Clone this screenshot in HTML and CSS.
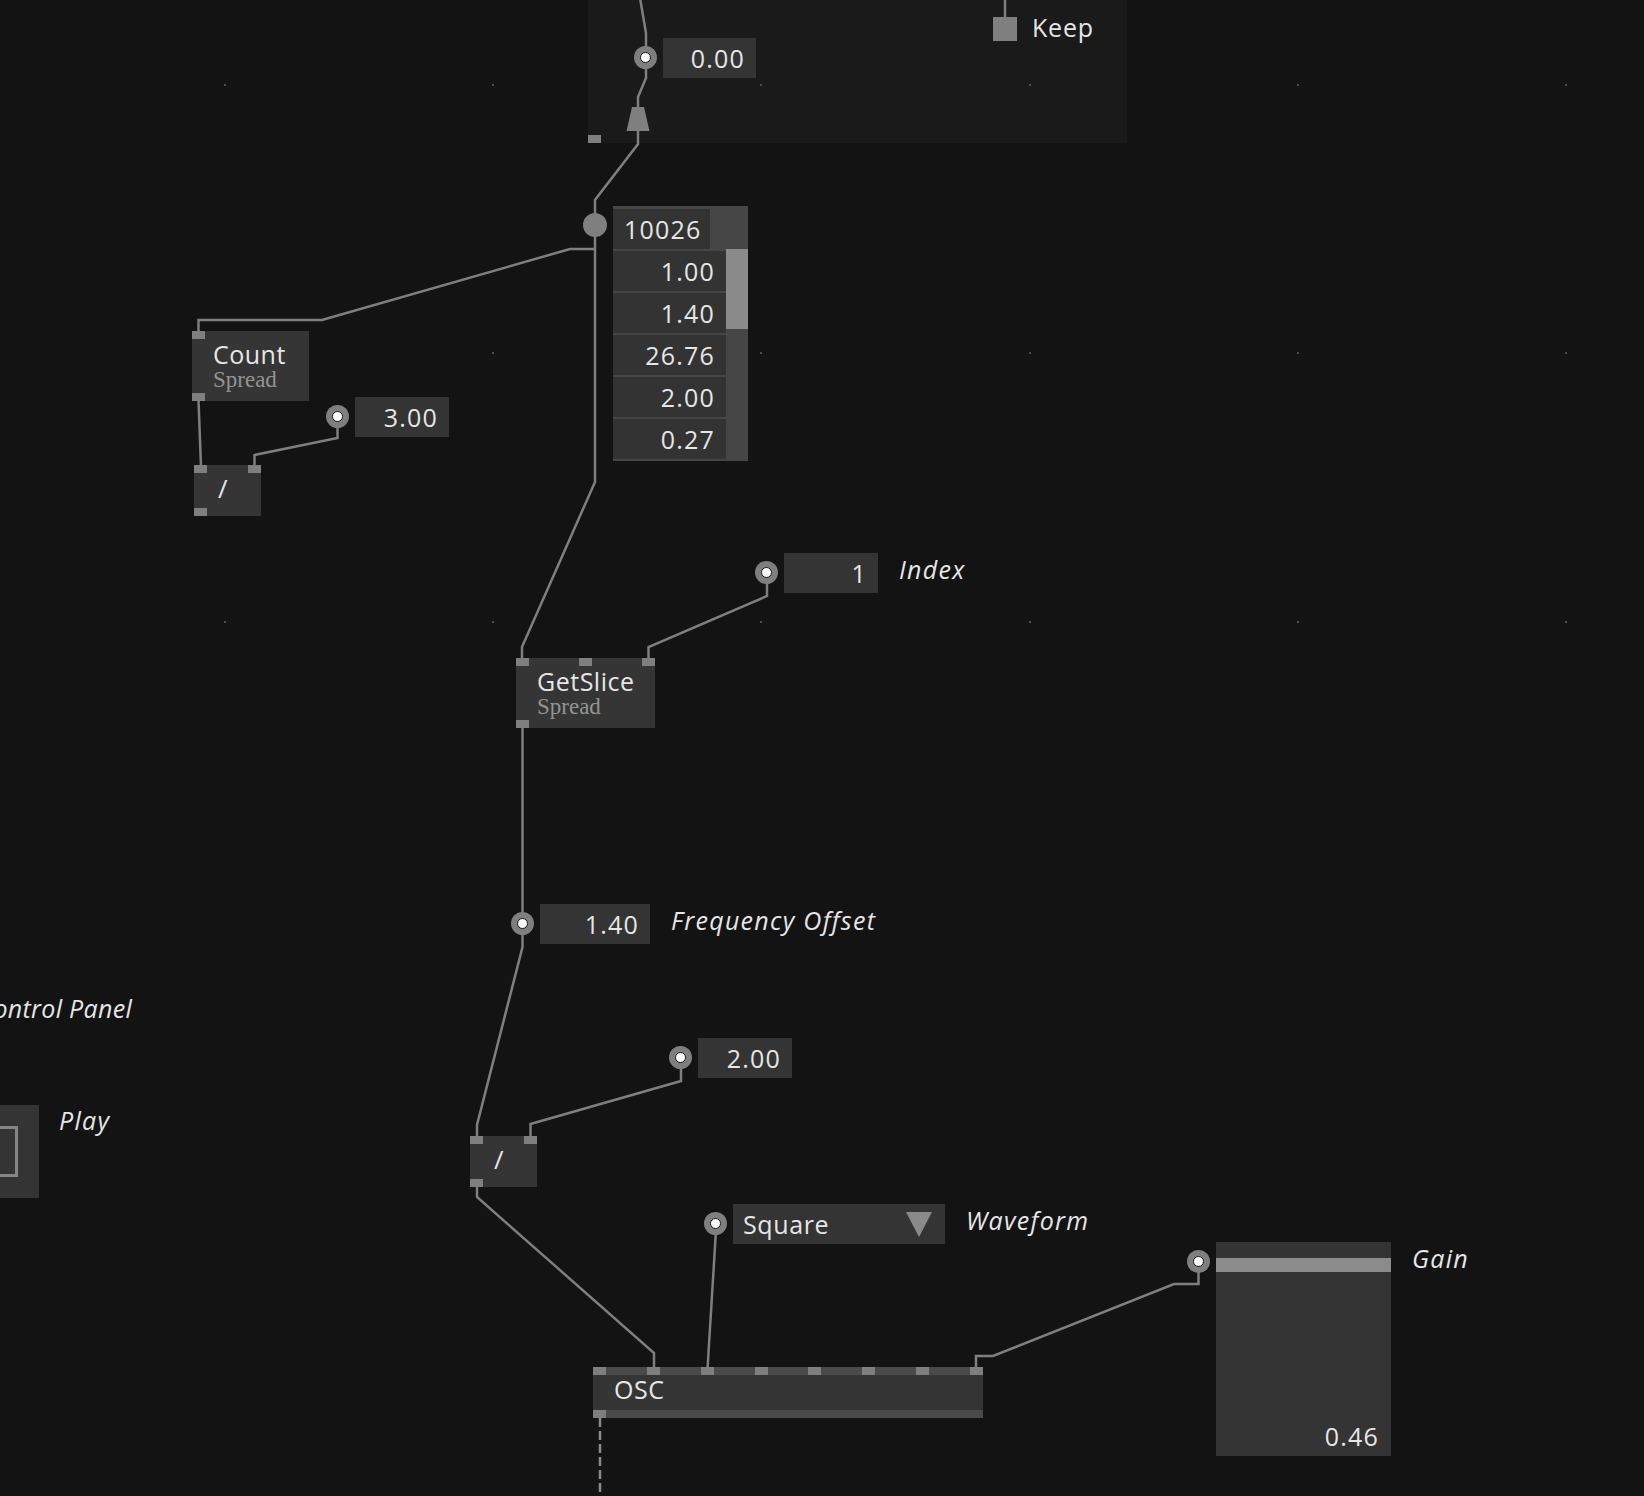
FILE: index.html
```html
<!DOCTYPE html>
<html lang="en">
<head>
    <meta charset="UTF-8">
    <title>Patch</title>
    <link rel="stylesheet" href="styles.css">
</head>
<body>
    <div class="patch">
        <!-- group region at the top -->
        <div class="group">
            <div class="group-pin"></div>
        </div>

        <svg class="wires" width="1644" height="1496" viewBox="0 0 1644 1496">
            <g class="grid">
                <rect x="224" y="84" width="2" height="2"/><rect x="492" y="84" width="2" height="2"/>
                <rect x="760" y="84" width="2" height="2"/><rect x="1029" y="84" width="2" height="2"/>
                <rect x="1297" y="84" width="2" height="2"/><rect x="1565" y="84" width="2" height="2"/>
                <rect x="224" y="352" width="2" height="2"/><rect x="492" y="352" width="2" height="2"/>
                <rect x="760" y="352" width="2" height="2"/><rect x="1029" y="352" width="2" height="2"/>
                <rect x="1297" y="352" width="2" height="2"/><rect x="1565" y="352" width="2" height="2"/>
                <rect x="224" y="621" width="2" height="2"/><rect x="492" y="621" width="2" height="2"/>
                <rect x="760" y="621" width="2" height="2"/><rect x="1029" y="621" width="2" height="2"/>
                <rect x="1297" y="621" width="2" height="2"/><rect x="1565" y="621" width="2" height="2"/>
            </g>
            <polyline points="640,-2 646,33 646,50"/>
            <polyline points="646,66 646,78 638,97 638,108"/>
            <polygon class="outlet" points="632,107 644,107 649.5,131 626.5,131"/>
            <polyline points="638,130 638,144 595,200 595,215"/>
            <polyline points="595,236 595,482 522,647 522,660"/>
            <polyline points="595,249 570,249 322,320 198.5,320 198.5,333"/>
            <polyline points="198.5,400 201,467"/>
            <polyline points="337.5,425 337.5,438 254.5,455 254.5,467"/>
            <polyline points="767,582 767,596 648.5,647 648.5,660"/>
            <polyline points="522.5,726 522.5,914"/>
            <polyline points="522.5,931 522.5,947 477,1125 477,1138"/>
            <polyline points="681,1066 681,1081 530.5,1124 530.5,1138"/>
            <polyline points="477,1185 477,1197 654,1353 654,1369"/>
            <polyline points="716,1230 707.5,1369"/>
            <polyline points="1198.5,1270 1198.5,1284 1174,1284 993,1356 976,1356 976,1369"/>
            <polyline points="1005,-2 1005,19"/>
            <polyline class="dashed" points="600,1418 600,1500"/>
        </svg>

        <!-- nodes -->
        <div class="node n-count">
            <div class="pins"><span class="pin"></span></div>
            <div class="title">Count</div>
            <div class="sub">Spread</div>
            <div class="pins pins-bottom"><span class="pin"></span></div>
        </div>

        <div class="node node-op n-div1">
            <div class="pins"><span class="pin"></span><span class="pin"></span></div>
            <div class="title">/</div>
            <div class="pins pins-bottom"><span class="pin"></span></div>
        </div>

        <div class="node n-getslice">
            <div class="pins"><span class="pin"></span><span class="pin"></span><span class="pin"></span></div>
            <div class="title">GetSlice</div>
            <div class="sub">Spread</div>
            <div class="pins pins-bottom"><span class="pin"></span></div>
        </div>

        <div class="node node-op n-div2">
            <div class="pins"><span class="pin"></span><span class="pin"></span></div>
            <div class="title">/</div>
            <div class="pins pins-bottom"><span class="pin"></span></div>
        </div>

        <div class="node node-wide n-osc">
            <div class="pins strip">
                <span class="pin"></span><span class="pin"></span><span class="pin"></span><span class="pin"></span>
                <span class="pin"></span><span class="pin"></span><span class="pin"></span><span class="pin"></span>
            </div>
            <div class="title">OSC</div>
            <div class="pins strip"><span class="pin"></span></div>
        </div>

        <!-- io boxes -->
        <div class="io at-zero">
            <span class="jack"></span>
            <div class="value w-93">0.00</div>
        </div>

        <div class="io at-keep">
            <span class="toggle"></span>
            <span class="label plain">Keep</span>
        </div>

        <div class="io at-spread">
            <span class="jack jack-solid"></span>
            <div class="spread">
                <div class="spread-head">10026</div>
                <div class="spread-body">
                    <div class="spread-rows">
                        <div class="spread-row">1.00</div>
                        <div class="spread-row">1.40</div>
                        <div class="spread-row">26.76</div>
                        <div class="spread-row">2.00</div>
                        <div class="spread-row">0.27</div>
                    </div>
                    <div class="scroll"><div class="thumb"></div></div>
                </div>
            </div>
        </div>

        <div class="io at-three">
            <span class="jack"></span>
            <div class="value w-94">3.00</div>
        </div>

        <div class="io at-index">
            <span class="jack"></span>
            <div class="value w-94">1</div>
            <span class="label">Index</span>
        </div>

        <div class="io at-freq">
            <span class="jack"></span>
            <div class="value w-110">1.40</div>
            <span class="label">Frequency Offset</span>
        </div>

        <div class="io at-two">
            <span class="jack"></span>
            <div class="value w-94">2.00</div>
        </div>

        <div class="io at-wave">
            <span class="jack"></span>
            <div class="dropdown">
                <span>Square</span>
                <span class="arrow"></span>
            </div>
            <span class="label">Waveform</span>
        </div>

        <div class="io at-gain">
            <span class="jack"></span>
            <div class="slider">
                <div class="slider-bar"></div>
                <div class="slider-value">0.46</div>
            </div>
            <span class="label">Gain</span>
        </div>

        <div class="caption at-panel">Control Panel</div>

        <div class="io at-play">
            <div class="bang"><span class="bang-box"></span></div>
            <span class="label">Play</span>
        </div>
    </div>
</body>
</html>
```

FILE: styles.css
```css
body {
    margin: 0;
    background: #131313;
    font-family: "Open Sans", "Noto Sans", sans-serif;
    color: #e6e6e6;
}
.patch {
    position: relative;
    width: 1644px;
    height: 1496px;
    overflow: hidden;
    background: #131313;
}

/* group region */
.group {
    position: absolute;
    left: 588px;
    top: -10px;
    width: 539px;
    height: 153px;
    background: #1a1a1a;
}
.group-pin {
    position: absolute;
    left: 0;
    bottom: 0;
    width: 13px;
    height: 8px;
    background: #7f7f7f;
}

/* wires */
.wires {
    position: absolute;
    left: 0;
    top: 0;
}
.wires polyline {
    fill: none;
    stroke: #7f7f7f;
    stroke-width: 2.5;
}
.wires .dashed {
    stroke: #8a8a8a;
    stroke-dasharray: 9 4;
}
.wires .outlet {
    fill: #7f7f7f;
}
.grid rect {
    fill: #4d4d4d;
}

/* nodes */
.node {
    position: absolute;
    display: flex;
    flex-direction: column;
    background: #353535;
}
.pins {
    display: flex;
    justify-content: space-between;
    height: 8px;
}
.pins-bottom {
    margin-top: auto;
}
.pin {
    width: 13px;
    height: 8px;
    background: #7f7f7f;
}
.title {
    padding: 2px 0 0 21px;
    font-size: 25px;
    line-height: 27px;
    letter-spacing: 0.5px;
    white-space: nowrap;
}
.sub {
    padding: 2px 0 0 21px;
    font-family: "Liberation Serif", serif;
    font-size: 23px;
    line-height: 20px;
    color: #939393;
}
.node-op .title {
    padding-left: 24px;
    font-size: 26px;
}
.node-wide .title {
    padding-top: 0;
    height: 35px;
    box-sizing: border-box;
    line-height: 28px;
}
.strip {
    background: #4a4a4a;
}

.n-count { left: 192px; top: 331px; width: 117px; height: 70px; }
.n-div1 { left: 194px; top: 465px; width: 67px; height: 51px; }
.n-getslice { left: 516px; top: 658px; width: 139px; height: 70px; }
.n-div2 { left: 470px; top: 1136px; width: 67px; height: 51px; }
.n-osc { left: 593px; top: 1367px; width: 390px; height: 51px; }

/* io boxes */
.io {
    position: absolute;
    display: flex;
    align-items: flex-start;
    gap: 6px;
}
.jack {
    display: flex;
    align-items: center;
    justify-content: center;
    flex: none;
    width: 23px;
    height: 23px;
    margin-top: 8px;
    border-radius: 50%;
    background: #7f7f7f;
}
.jack::after {
    content: "";
    width: 9px;
    height: 9px;
    border-radius: 50%;
    background: #fff;
    border: 1.5px solid #151515;
}
.jack-solid {
    width: 24px;
    height: 24px;
    margin-top: 7px;
}
.jack-solid::after {
    display: none;
}
.value {
    height: 40px;
    padding-right: 11px;
    box-sizing: border-box;
    background: #343434;
    font-size: 25px;
    line-height: 40px;
    letter-spacing: 1.2px;
    text-align: right;
}
.w-93 { width: 93px; }
.w-94 { width: 94px; }
.w-110 { width: 110px; }

.label {
    margin-left: 15px;
    font-size: 25px;
    line-height: 32px;
    letter-spacing: 1.3px;
    font-style: italic;
    white-space: nowrap;
}
.label.plain {
    margin-left: 9px;
    margin-top: -6px;
    font-style: normal;
    letter-spacing: 0.8px;
}
.toggle {
    width: 24px;
    height: 24px;
    background: #7f7f7f;
}

.at-zero { left: 634px; top: 38px; }
.at-keep { left: 993px; top: 17px; }
.at-spread { left: 583px; top: 206px; }
.at-three { left: 326px; top: 397px; }
.at-index { left: 755px; top: 553px; }
.at-freq { left: 511px; top: 904px; }
.at-two { left: 669px; top: 1038px; }
.at-wave { left: 704px; top: 1204px; }
.at-gain { left: 1187px; top: 1242px; }
.at-play { left: -55px; top: 1105px; }

/* spread viewer */
.spread {
    display: flex;
    flex-direction: column;
    width: 135px;
    padding-top: 3px;
    background: #464646;
}
.spread-head {
    width: 97px;
    height: 40px;
    padding-left: 11px;
    box-sizing: border-box;
    background: #333;
    font-size: 25px;
    line-height: 40px;
    letter-spacing: 1.2px;
}
.spread-body {
    display: flex;
}
.spread-rows {
    display: flex;
    flex-direction: column;
    gap: 2px;
    width: 113px;
    padding: 2px 0;
}
.spread-row {
    height: 40px;
    padding-right: 11px;
    background: #333;
    font-size: 25px;
    line-height: 40px;
    letter-spacing: 1.2px;
    text-align: right;
}
.scroll {
    flex: 1;
}
.thumb {
    height: 80px;
    background: #8a8a8a;
}

/* enum */
.dropdown {
    display: flex;
    align-items: center;
    justify-content: space-between;
    width: 212px;
    height: 40px;
    padding: 0 13px 0 10px;
    box-sizing: border-box;
    background: #343434;
    font-size: 25px;
    line-height: 40px;
    letter-spacing: 0.6px;
}
.arrow {
    width: 0;
    height: 0;
    border-left: 13px solid transparent;
    border-right: 13px solid transparent;
    border-top: 25px solid #8a8a8a;
}

/* slider */
.slider {
    display: flex;
    flex-direction: column;
    width: 175px;
    height: 214px;
    background: #343434;
}
.slider-bar {
    height: 14px;
    margin-top: 16px;
    background: #8c8c8c;
}
.slider-value {
    margin-top: auto;
    padding: 0 12px 4px 0;
    font-size: 25px;
    line-height: 32px;
    letter-spacing: 1.2px;
    text-align: right;
}

/* bang */
.bang {
    display: flex;
    align-items: center;
    justify-content: center;
    width: 94px;
    height: 93px;
    background: #343434;
}
.bang-box {
    width: 51px;
    height: 51px;
    box-sizing: border-box;
    border: 3px solid #858585;
}
.at-play .label {
    margin-left: 14px;
    margin-top: -1px;
}

.caption {
    position: absolute;
    font-size: 25px;
    line-height: 32px;
    letter-spacing: 0.3px;
    font-style: italic;
    white-space: nowrap;
}
.at-panel {
    left: -120px;
    top: 992px;
    width: 252px;
    text-align: right;
}
```
